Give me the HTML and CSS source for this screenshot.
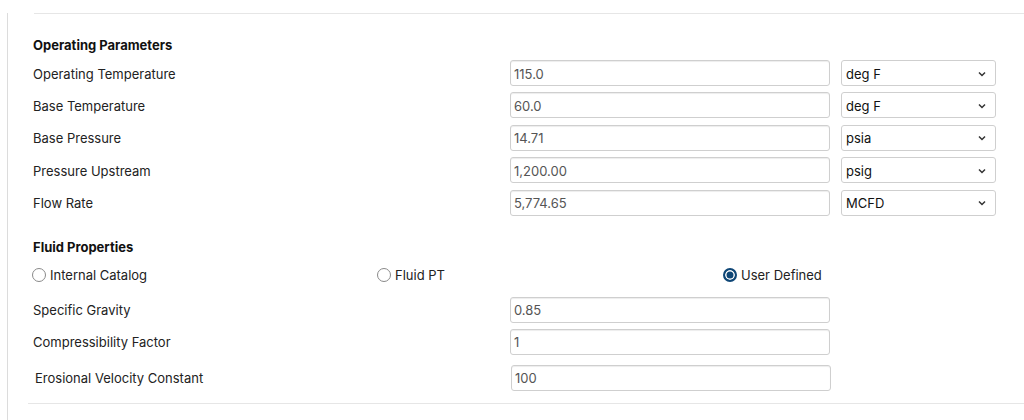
FILE: index.html
```html
<!DOCTYPE html>
<html>
<head>
<meta charset="utf-8">
<link rel="stylesheet" href="styles.css">
</head>
<body>
<div class="frame">
  <div class="panel">
    <div class="top-rule"></div>
    <h3 class="heading first">Operating Parameters</h3>
    <div class="rows">
      <div class="row">
        <span class="label">Operating Temperature</span>
        <div class="input">115.0</div>
        <div class="select"><span>deg F</span><svg width="8" height="6" viewBox="0 0 8 6"><path d="M1 1.5 L4 4.5 L7 1.5" fill="none" stroke="#333" stroke-width="1.5"/></svg></div>
      </div>
      <div class="row">
        <span class="label">Base Temperature</span>
        <div class="input">60.0</div>
        <div class="select"><span>deg F</span><svg width="8" height="6" viewBox="0 0 8 6"><path d="M1 1.5 L4 4.5 L7 1.5" fill="none" stroke="#333" stroke-width="1.5"/></svg></div>
      </div>
      <div class="row">
        <span class="label">Base Pressure</span>
        <div class="input">14.71</div>
        <div class="select"><span>psia</span><svg width="8" height="6" viewBox="0 0 8 6"><path d="M1 1.5 L4 4.5 L7 1.5" fill="none" stroke="#333" stroke-width="1.5"/></svg></div>
      </div>
      <div class="row">
        <span class="label">Pressure Upstream</span>
        <div class="input">1,200.00</div>
        <div class="select"><span>psig</span><svg width="8" height="6" viewBox="0 0 8 6"><path d="M1 1.5 L4 4.5 L7 1.5" fill="none" stroke="#333" stroke-width="1.5"/></svg></div>
      </div>
      <div class="row">
        <span class="label">Flow Rate</span>
        <div class="input">5,774.65</div>
        <div class="select"><span>MCFD</span><svg width="8" height="6" viewBox="0 0 8 6"><path d="M1 1.5 L4 4.5 L7 1.5" fill="none" stroke="#333" stroke-width="1.5"/></svg></div>
      </div>
    </div>

    <h3 class="heading second">Fluid Properties</h3>
    <div class="radios">
      <label class="radio"><span class="dot"></span>Internal Catalog</label>
      <label class="radio"><span class="dot"></span>Fluid PT</label>
      <label class="radio"><span class="dot checked"></span>User Defined</label>
    </div>

    <div class="row r-sg">
      <span class="label">Specific Gravity</span>
      <div class="input">0.85</div>
    </div>
    <div class="row r-cf">
      <span class="label">Compressibility Factor</span>
      <div class="input">1</div>
    </div>
    <div class="row r-ev">
      <span class="label">Erosional Velocity Constant</span>
      <div class="input">100</div>
    </div>
  </div>
  <div class="bottom-rule"></div>
</div>
</body>
</html>
```

FILE: styles.css
```css
html, body {
  margin: 0;
  padding: 0;
  background: #fff;
}
body {
  font-family: Inter, "Noto Sans", "Liberation Sans", sans-serif;
  font-size: 13px;
  color: #222;
}
.frame {
  margin-left: 7px;
  border-left: 1px solid #dcdcdc;
  height: 420px;
  box-sizing: border-box;
}
.panel {
  padding-left: 25px;
}
.top-rule {
  margin-top: 13px;
  margin-left: 1px;
  border-top: 1px solid #e6e6e6;
}
.heading {
  margin: 0;
  font-size: 13px;
  font-weight: 700;
  line-height: 20px;
  color: #111;
}
.heading.first {
  padding-top: 21px;
}
.heading.second {
  margin-top: 21px;
}
.rows {
  margin-top: 5px;
  display: flex;
  flex-direction: column;
  gap: 6.4px;
}
.row {
  display: flex;
  align-items: center;
  height: 26px;
}
.label {
  width: 477px;
  flex: none;
  line-height: 20px;
  padding-top: 1px;
}
.input {
  width: 320px;
  height: 26px;
  box-sizing: border-box;
  border: 1px solid #cfcfcf;
  border-radius: 3px;
  box-shadow: inset 0 1px 1px rgba(0, 0, 0, 0.075);
  padding-left: 3px;
  padding-top: 1px;
  display: flex;
  align-items: center;
  color: #555;
  background: #fff;
}
.select {
  margin-left: 11px;
  width: 155px;
  height: 26px;
  box-sizing: border-box;
  border: 1px solid #cfcfcf;
  border-radius: 3px;
  padding: 1px 9px 0 4px;
  display: flex;
  align-items: center;
  justify-content: space-between;
  color: #111;
  background: #fff;
}
.radios {
  margin-top: 7px;
  padding-top: 1px;
  display: grid;
  grid-template-columns: 345px 346px 1fr;
  height: 20px;
  align-items: center;
}
.radio {
  display: flex;
  align-items: center;
  gap: 4px;
  line-height: 20px;
  margin-left: -1px;
}
.dot {
  width: 12px;
  height: 12px;
  border: 1px solid #8a8a8a;
  border-radius: 50%;
  background: #fff;
  flex: none;
}
.dot.checked {
  width: 10px;
  height: 10px;
  border: 2px solid #0e4676;
  background: #0e4676;
  box-shadow: inset 0 0 0 1.5px #fff;
}
.r-sg {
  margin-top: 12px;
}
.r-cf {
  margin-top: 6px;
}
.r-ev {
  margin-top: 10px;
}
.r-ev .label {
  padding-left: 2px;
  width: 476px;
  box-sizing: border-box;
}
.r-ev .input {
  margin-left: 2px;
}
.bottom-rule {
  margin-top: 12px;
  margin-left: 20px;
  border-top: 1px solid #e6e6e6;
}
```
